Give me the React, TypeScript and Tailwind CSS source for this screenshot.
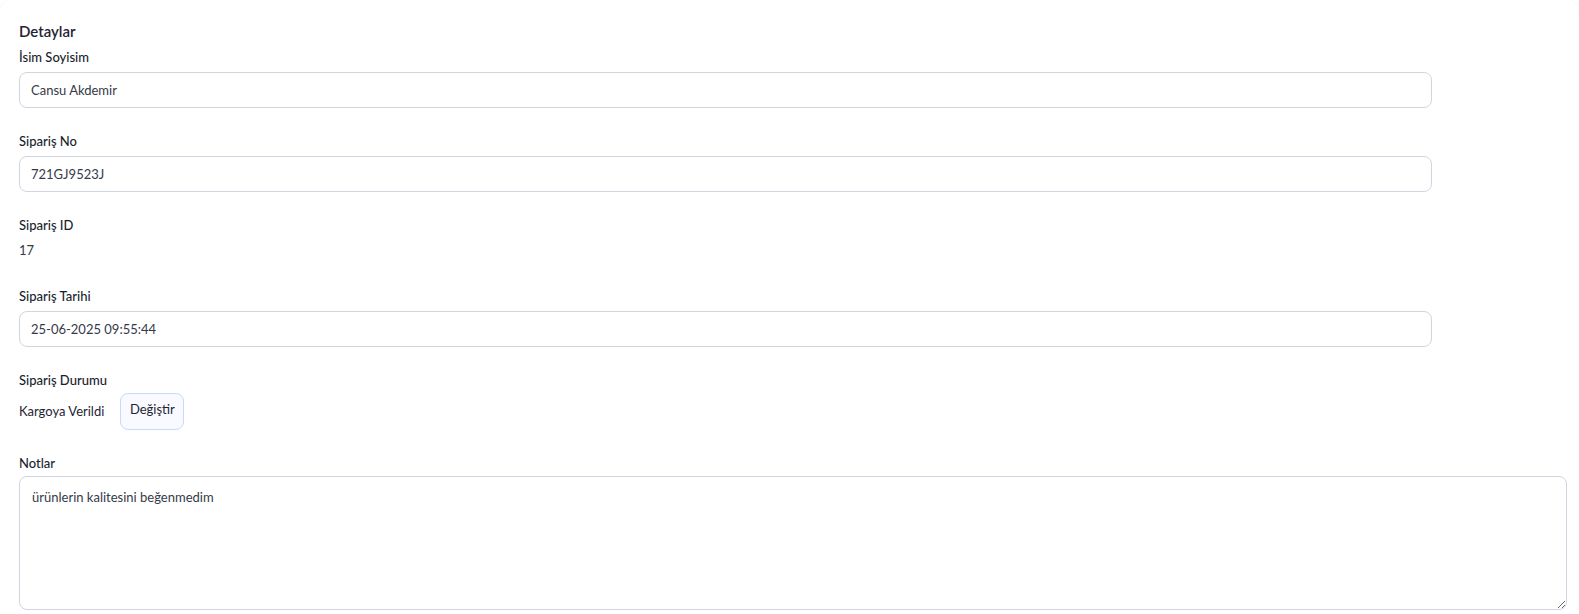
import React from "react";

const font = { fontFamily: "Lato, 'Noto Sans', sans-serif" };

function Label({ children }: { children: React.ReactNode }) {
  return <div className="text-[13px] leading-[18px] font-medium text-[#1a1f2e]">{children}</div>;
}

function Field({ label, value }: { label: string; value: string }) {
  return (
    <div className="flex flex-col gap-[6px]">
      <Label>{label}</Label>
      <input
        readOnly
        value={value}
        className="w-[1413px] h-[36px] rounded-lg border border-[#cfd6e0] bg-white px-[11px] text-[13px] text-[#343a48] outline-none"
        style={font}
      />
    </div>
  );
}

export default function App() {
  return (
    <div className="min-h-screen bg-white" style={font}>
      <div className="rounded-xl bg-white shadow-[0_0_3px_rgba(0,0,0,0.06)] pl-[19px] pr-[12px] pt-[20px] pb-6 flex flex-col">
        <div className="text-[15px] leading-[22px] font-semibold text-[#1f2433] mb-[6px]">Detaylar</div>
        <div className="flex flex-col gap-6">
          <Field label="İsim Soyisim" value="Cansu Akdemir" />
          <Field label="Sipariş No" value="721GJ9523J" />
          <div className="flex flex-col gap-[6px] mb-[3px]">
            <Label>Sipariş ID</Label>
            <div className="text-[13px] leading-5 text-[#343a48]">17</div>
          </div>
          <Field label="Sipariş Tarihi" value="25-06-2025 09:55:44" />
          <div className="flex flex-col gap-[4px]">
            <Label>Sipariş Durumu</Label>
            <div className="flex items-center gap-[16px]">
              <span className="text-[13px] text-[#1f2433]">Kargoya Verildi</span>
              <button className="w-[64px] h-[37px] pb-[3px] rounded-lg border border-[#c9d8fb] bg-[#f8faff] text-[13px] text-[#1f2433] font-normal" style={font}>
                Değiştir
              </button>
            </div>
          </div>
          <div className="flex flex-col gap-[4px]">
            <Label>Notlar</Label>
            <textarea
              readOnly
              value="ürünlerin kalitesini beğenmedim"
              className="w-full h-[134px] rounded-lg border border-[#cfd6e0] bg-white px-3 py-[10px] text-[13px] leading-5 text-[#343a48] outline-none"
              style={font}
            />
          </div>
        </div>
      </div>
    </div>
  );
}
